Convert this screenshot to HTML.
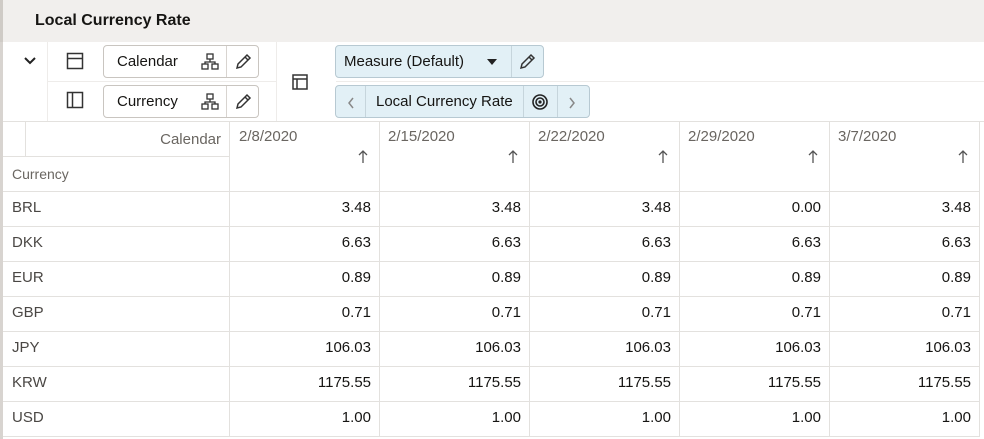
<!DOCTYPE html>
<html><head><style>
*{box-sizing:border-box;margin:0;padding:0}
body{width:984px;height:439px;overflow:hidden;background:#fff;font-family:"Liberation Sans",sans-serif;color:#161513;position:relative}
.a{position:absolute}
.title{left:0;top:0;width:984px;height:42px;background:#f1efed;border-left:3px solid #cfcbc6}
.title span{position:absolute;left:32px;top:12px;font-size:16px;font-weight:bold}
.btn{border:1px solid #c9c5c0;border-radius:4px;height:33px;background:#fff;font-size:15px}
.blue{background:#e2f0f6;border-color:#b7c9d2}
.sep{position:absolute;top:0;width:1px;height:100%;background:#d8d4d0}
.t{position:absolute;top:7px}
.cell{position:absolute;border-right:1px solid #e3e1de;border-bottom:1px solid #e3e1de;font-size:15px}
.num{text-align:right;padding-right:8px;line-height:34px}
.lbl{padding-left:9px;line-height:34px;color:#4a4744}
.hd{color:#6a6661;font-size:15px}
</style></head><body>
<div class="a title"><span>Local Currency Rate</span></div>
<div class="a" style="left:0;top:42px;width:3px;height:397px;background:#d8d4d0"></div>
<svg class="a" style="left:22px;top:55px" width="16" height="12"><path d="M3 3l5 5 5-5" stroke="#222" stroke-width="2" fill="none"/></svg>
<div class="a" style="left:47px;top:42px;width:1px;height:79px;background:#eeecea"></div>
<div class="a" style="left:47px;top:81px;width:230px;height:1px;background:#eeecea"></div>
<div class="a" style="left:276px;top:42px;width:1px;height:79px;background:#eeecea"></div>
<div class="a" style="left:336px;top:81px;width:648px;height:1px;background:#eeecea"></div>
<svg class="a" style="left:66px;top:52px" width="18" height="18"><rect x="1.5" y="1.5" width="15" height="15" fill="none" stroke="#333" stroke-width="1.5"/><path d="M1.5 6.5h15" stroke="#333" stroke-width="1.5"/></svg>
<svg class="a" style="left:66px;top:91px" width="18" height="18"><rect x="1.5" y="1.5" width="15" height="15" fill="none" stroke="#333" stroke-width="1.5"/><path d="M6.5 1.5v15" stroke="#333" stroke-width="1.5"/></svg>
<svg class="a" style="left:292px;top:74px" width="16" height="16"><rect x="1" y="1" width="14" height="14" fill="none" stroke="#333" stroke-width="1.5"/><path d="M1 5h14M5 5v10" stroke="#333" stroke-width="1.5" fill="none"/></svg>
<div class="a btn" style="left:103px;top:45px;width:156px"><span class="t" style="left:13px">Calendar</span><div class="sep" style="left:122px"></div>
<svg class="a" style="left:97px;top:7px" width="18" height="18"><g fill="none" stroke="#333" stroke-width="1.3"><rect x="6" y="1" width="6" height="5"/><rect x="1" y="11" width="6" height="5"/><rect x="11" y="11" width="6" height="5"/><path d="M9 6v3M4 11V9h10v2"/></g></svg>
<svg class="a" style="left:130px;top:7px" width="18" height="18"><path d="M3 15l1-4 9-9 3 3-9 9z M11 4l3 3" fill="none" stroke="#333" stroke-width="1.5"/></svg></div>
<div class="a btn" style="left:103px;top:85px;width:156px"><span class="t" style="left:13px">Currency</span><div class="sep" style="left:122px"></div>
<svg class="a" style="left:97px;top:7px" width="18" height="18"><g fill="none" stroke="#333" stroke-width="1.3"><rect x="6" y="1" width="6" height="5"/><rect x="1" y="11" width="6" height="5"/><rect x="11" y="11" width="6" height="5"/><path d="M9 6v3M4 11V9h10v2"/></g></svg>
<svg class="a" style="left:130px;top:7px" width="18" height="18"><path d="M3 15l1-4 9-9 3 3-9 9z M11 4l3 3" fill="none" stroke="#333" stroke-width="1.5"/></svg></div>
<div class="a btn blue" style="left:335px;top:45px;width:209px"><span class="t" style="left:8px">Measure (Default)</span>
<svg class="a" style="left:150px;top:12px" width="12" height="8"><path d="M1 1h10l-5 6z" fill="#222"/></svg>
<div class="sep" style="left:175px;background:#c6d5dc"></div>
<svg class="a" style="left:182px;top:7px" width="18" height="18"><path d="M3 15l1-4 9-9 3 3-9 9z M11 4l3 3" fill="none" stroke="#333" stroke-width="1.5"/></svg></div>
<div class="a btn blue" style="left:335px;top:85px;width:255px">
<svg class="a" style="left:10px;top:10px" width="10" height="14"><path d="M7 2L3 7l4 5" fill="none" stroke="#888" stroke-width="1.5"/></svg>
<div class="sep" style="left:29px;background:#c6d5dc"></div>
<span class="t" style="left:40px">Local Currency Rate</span>
<div class="sep" style="left:187px;background:#c6d5dc"></div>
<svg class="a" style="left:195px;top:7px" width="18" height="18"><g fill="none" stroke="#222" stroke-width="1.6"><circle cx="9" cy="9" r="7"/><circle cx="9" cy="9" r="4"/></g><circle cx="9" cy="9" r="1.6" fill="#222"/></svg>
<div class="sep" style="left:221px;background:#c6d5dc"></div>
<svg class="a" style="left:231px;top:10px" width="10" height="14"><path d="M3 2l4 5-4 5" fill="none" stroke="#888" stroke-width="1.5"/></svg></div>
<div class="a" style="left:3px;top:121px;width:981px;height:1px;background:#e3e1de"></div>
<div class="a" style="left:25px;top:121px;width:1px;height:35px;background:#e3e1de"></div>
<div class="a" style="left:3px;top:156px;width:226px;height:1px;background:#e3e1de"></div>
<div class="cell hd" style="left:3px;top:121px;width:227px;height:71px"><span class="a" style="right:8px;top:10px">Calendar</span><span class="a" style="left:9px;top:45px;font-size:14px">Currency</span></div>
<div id="g"></div>
<script>
var dates=["2/8/2020","2/15/2020","2/22/2020","2/29/2020","3/7/2020"];
var rows=[["BRL","3.48","3.48","3.48","0.00","3.48"],["DKK","6.63","6.63","6.63","6.63","6.63"],["EUR","0.89","0.89","0.89","0.89","0.89"],["GBP","0.71","0.71","0.71","0.71","0.71"],["JPY","106.03","106.03","106.03","106.03","106.03"],["KRW","1175.55","1175.55","1175.55","1175.55","1175.55"],["USD","1.00","1.00","1.00","1.00","1.00"]];
var h="";
for(var i=0;i<5;i++){var x=229+i*150;
h+='<div class="cell hd" style="left:'+x+'px;top:121px;width:151px;height:71px;border-left:'+(i==0?'1px solid #e3e1de':'0')+'"><span class="a" style="left:9px;top:7px">'+dates[i]+'</span><svg class="a" style="right:11px;top:28px" width="10" height="15"><path d="M5 14V2M1 6l4-4 4 4" fill="none" stroke="#555" stroke-width="1.3"/></svg></div>';}
for(var r=0;r<7;r++){var y=191+r*35;
h+='<div class="cell lbl" style="left:3px;top:'+y+'px;width:227px;height:36px">'+rows[r][0]+'</div>';
for(var i=0;i<5;i++){var x=229+i*150;h+='<div class="cell num" style="left:'+x+'px;top:'+y+'px;width:151px;height:36px;border-left:'+(i==0?'1px solid #e3e1de':'0')+'">'+rows[r][i+1]+'</div>';}}
document.getElementById("g").innerHTML=h;
</script>
</body></html>
